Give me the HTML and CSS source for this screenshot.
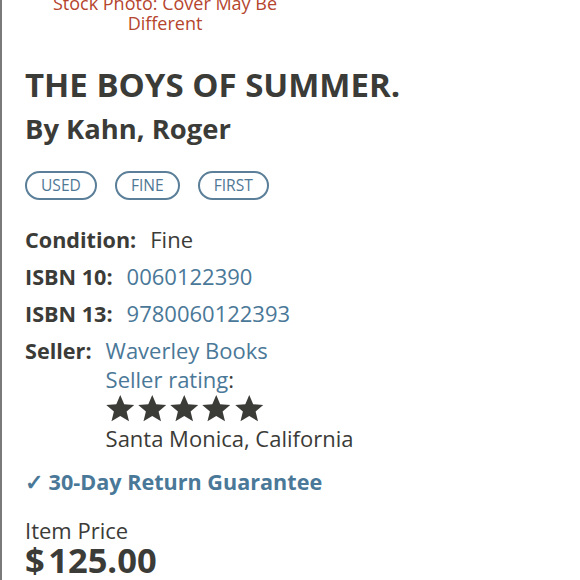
FILE: index.html
```html
<!DOCTYPE html>
<html>
<head>
<meta charset="utf-8">
<link rel="stylesheet" href="styles.css">
</head>
<body>
<div class="page">
  <div class="stock">Stock Photo: Cover May Be<br>Different</div>
  <h1 class="title">THE BOYS OF SUMMER.</h1>
  <h2 class="author">By Kahn, Roger</h2>
  <div class="pills">
    <span class="pill">USED</span>
    <span class="pill">FINE</span>
    <span class="pill">FIRST</span>
  </div>
  <div class="details">
    <div class="row"><span class="label">Condition:</span><span class="value">Fine</span></div>
    <div class="row"><span class="label">ISBN 10:</span><span class="value link">0060122390</span></div>
    <div class="row"><span class="label">ISBN 13:</span><span class="value link">9780060122393</span></div>
    <div class="row seller">
      <span class="label">Seller:</span>
      <div class="seller-info">
        <span class="link">Waverley Books</span>
        <span><span class="link">Seller rating</span>:</span>
        <div class="stars">
          <svg viewBox="0 0 24 24"><path d="M12 1.5l3.1 7.3 7.9.6-6 5.2 1.9 7.7L12 18.1l-6.9 4.2 1.9-7.7-6-5.2 7.9-.6z"/></svg>
          <svg viewBox="0 0 24 24"><path d="M12 1.5l3.1 7.3 7.9.6-6 5.2 1.9 7.7L12 18.1l-6.9 4.2 1.9-7.7-6-5.2 7.9-.6z"/></svg>
          <svg viewBox="0 0 24 24"><path d="M12 1.5l3.1 7.3 7.9.6-6 5.2 1.9 7.7L12 18.1l-6.9 4.2 1.9-7.7-6-5.2 7.9-.6z"/></svg>
          <svg viewBox="0 0 24 24"><path d="M12 1.5l3.1 7.3 7.9.6-6 5.2 1.9 7.7L12 18.1l-6.9 4.2 1.9-7.7-6-5.2 7.9-.6z"/></svg>
          <svg viewBox="0 0 24 24"><path d="M12 1.5l3.1 7.3 7.9.6-6 5.2 1.9 7.7L12 18.1l-6.9 4.2 1.9-7.7-6-5.2 7.9-.6z"/></svg>
        </div>
        <span>Santa Monica, California</span>
      </div>
    </div>
  </div>
  <div class="guarantee">✓ 30-Day Return Guarantee</div>
  <div class="price-label">Item Price</div>
  <div class="price">$&#8202;125.00</div>
</div>
</body>
</html>
```
FILE: styles.css
```css
html, body {
  margin: 0;
  padding: 0;
  background: #ffffff;
}
body {
  font-family: "Open Sans", "Noto Sans", sans-serif;
  color: #3b3b38;
}
.page {
  border-left: 2px solid #7a7a7a;
  height: 580px;
  box-sizing: border-box;
  padding-left: 23px;
  overflow: hidden;
}
.stock {
  width: 280px;
  margin-top: -7px;
  text-align: center;
  color: #b5452e;
  font-size: 18px;
  line-height: 20px;
}
.title {
  margin: 32px 0 0 0;
  font-size: 33px;
  line-height: 40px;
  font-weight: 700;
}
.author {
  margin: 7px 0 0 0;
  font-size: 27.4px;
  line-height: 34px;
  font-weight: 700;
}
.pills {
  display: flex;
  gap: 18px;
  margin-top: 25px;
}
.pill {
  border: 2px solid #5b7f98;
  border-radius: 16px;
  color: #4f7896;
  font-size: 15.6px;
  line-height: 25px;
  padding: 0 14px;
}
.details {
  margin-top: 25px;
  display: flex;
  flex-direction: column;
  gap: 8px;
  font-size: 22px;
  line-height: 29px;
}
.row {
  display: flex;
  gap: 14px;
}
.label {
  font-weight: 700;
  font-size: 21.6px;
}
.link {
  color: #4a7898;
}
.seller-info {
  display: flex;
  flex-direction: column;
}
.stars {
  display: flex;
  gap: 1.8px;
  margin: -1px 0 0 -1px;
}
.stars svg {
  width: 30.5px;
  height: 30.5px;
  fill: #3b3b38;
}
.guarantee {
  margin-top: 15px;
  color: #4a7898;
  font-weight: 700;
  font-size: 21.6px;
  line-height: 28px;
}
.price-label {
  margin-top: 22px;
  font-size: 22px;
  line-height: 24px;
}
.price {
  font-size: 34.5px;
  font-weight: 700;
  line-height: 35px;
}
```
